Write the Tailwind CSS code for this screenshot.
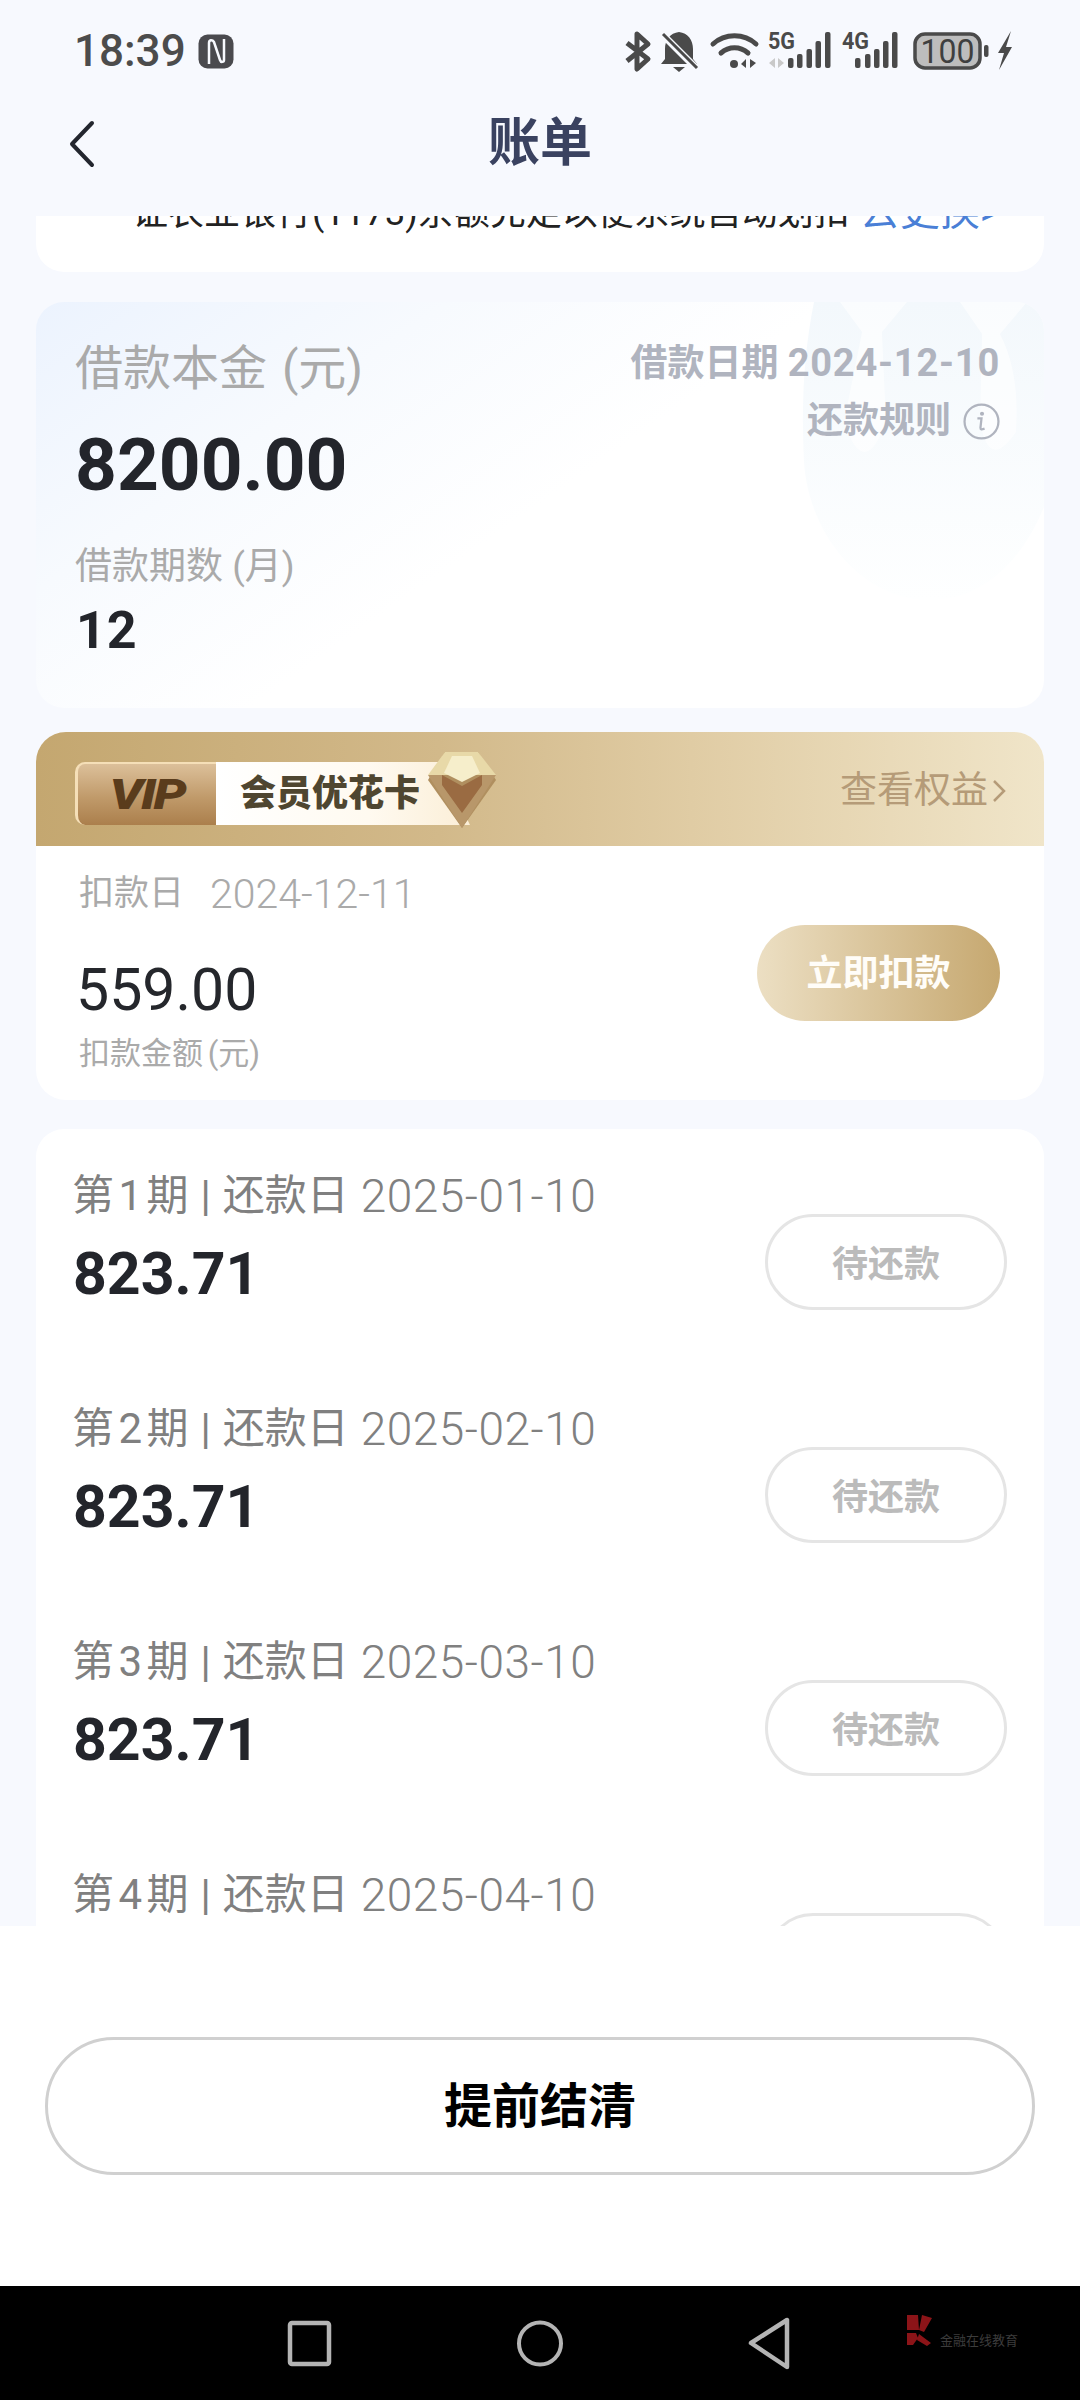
<!DOCTYPE html>
<html lang="zh">
<head>
<meta charset="utf-8">
<script src="https://cdn.jsdelivr.net/npm/@tailwindcss/browser@4"></script>
</head>
<body class="m-0">
<div class="w-[1080px] h-[2400px] flex flex-col overflow-hidden bg-[#f7f9fe] font-[Roboto,'Noto_Sans_CJK_SC',sans-serif]">

  <!-- status bar + nav header -->
  <header class="h-[216px] shrink-0 flex flex-col">
    <div class="h-[100px] shrink-0 relative flex items-start pl-[74px] pt-[26px]">
      <span class="text-[44px] leading-[50px] font-medium text-[#4c4c4c]">18:39</span>
      <svg class="ml-[12px] mt-[8px]" width="36" height="36" viewBox="0 0 36 36">
        <rect x="0.500" y="0.500" width="35" height="34" rx="9" fill="#4a4a4e"/>
        <path d="M11 30V9c0-3 3-4 5-1l6 18c1 3 4 2 4 0V5" fill="none" stroke="#f7f9fe" stroke-width="2.500"/>
        <path d="M6 8v19M31 8v19" stroke="#4a4a4e" stroke-width="2"/>
      </svg>
      <svg class="absolute left-[600px] top-[20px]" width="440" height="60" viewBox="0 0 440 60">
        <path d="M27 23 48 39 37 49V14l11 10-21 17" fill="none" stroke="#4a4a4a" stroke-width="5" stroke-linejoin="round"/>
        <path d="M79 12c-9 1-14 8-14 17v10l-4 5h36l-4-5V29c0-9-5-16-14-17z" fill="#4a4a4a"/>
        <path d="M73 47h12l-6 5z" fill="#4a4a4a"/>
        <path d="M60 12 96 48" stroke="#f7f9fe" stroke-width="7"/>
        <path d="M63 14 97 48" stroke="#4a4a4a" stroke-width="3"/>
        <path d="M113 24c12-11 31-11 43 0M121 33c8-7 19-7 27 0" fill="none" stroke="#4a4a4a" stroke-width="5" stroke-linecap="round"/>
        <circle cx="134" cy="44" r="4" fill="#4a4a4a"/>
        <path d="M146 39v9l-5-4zM150 39v9l6-5z" fill="#4a4a4a"/>
        <text x="168" y="29" font-size="23" font-weight="700" fill="#4a4a4a" font-family="Roboto" textLength="27" lengthAdjust="spacingAndGlyphs">5G</text>
        <path d="M175 38v10l-6-5zM178 38v10l6-5z" fill="#c9c9c9"/>
        <g fill="#4a4a4a">
          <rect x="188" y="38" width="5.500" height="10" rx="2"/>
          <rect x="197" y="34" width="5.500" height="14" rx="2"/>
          <rect x="206.500" y="29" width="5.500" height="19" rx="2"/>
          <rect x="215.500" y="21" width="5.500" height="27" rx="2"/>
          <rect x="225" y="12" width="5.500" height="36" rx="2"/>
          <rect x="255" y="38" width="5.500" height="10" rx="2"/>
          <rect x="265" y="34" width="5.500" height="14" rx="2"/>
          <rect x="274" y="29" width="5.500" height="19" rx="2"/>
          <rect x="283" y="21" width="5.500" height="27" rx="2"/>
          <rect x="292" y="12" width="5.500" height="36" rx="2"/>
        </g>
        <text x="242" y="29" font-size="23" font-weight="700" fill="#4a4a4a" font-family="Roboto" textLength="27" lengthAdjust="spacingAndGlyphs">4G</text>
        <rect x="315" y="14" width="65" height="34" rx="10" fill="#bdbdbd" stroke="#4a4a4a" stroke-width="3.500"/>
        <text x="347.500" y="43" text-anchor="middle" font-size="33" fill="#3f3f3f" font-family="Roboto" textLength="54" lengthAdjust="spacingAndGlyphs">100</text>
        <rect x="384" y="25" width="4.500" height="12" rx="2" fill="#4a4a4a"/>
        <path d="M411 11 398 33h6l-5 17 13-23h-6z" fill="#4a4a4a"/>
      </svg>
    </div>
    <div class="h-[88px] shrink-0 relative flex items-center justify-center">
      <svg class="absolute left-[68px] top-[20px]" width="28" height="48" viewBox="0 0 28 48">
        <path d="M24 3 4 24l20 21" fill="none" stroke="#23262e" stroke-width="4" stroke-linecap="round" stroke-linejoin="round"/>
      </svg>
      <span class="text-[52px] leading-[72px] font-bold text-[#3a4260]">账单</span>
    </div>
  </header>

  <!-- scroll area -->
  <main class="h-[1710px] shrink-0 overflow-hidden flex flex-col">
    <!-- scrolled, clipped first card -->
    <div class="mx-[36px] h-[56px] shrink-0 bg-white rounded-b-[28px] overflow-hidden">
      <div class="mt-[-26px] pl-[96px] h-[44px] whitespace-nowrap text-[36px] leading-[44px] text-[#222]">
        证农业银行(1173)余额充足以便系统自动划扣<span class="text-[40px] text-[#4a7fd6] ml-[10px]">去更换&gt;</span>
      </div>
    </div>

    <!-- loan card -->
    <section class="mt-[30px] mx-[36px] h-[406px] shrink-0 relative overflow-hidden rounded-[28px] bg-[linear-gradient(145deg,#ecf3fe_0%,#f7fafe_26%,#ffffff_50%,#ffffff_100%)]">
      <svg class="absolute right-0 top-0" width="260" height="300" viewBox="0 0 260 300">
        <defs>
          <linearGradient id="blob" x1="0" y1="0" x2="0" y2="1">
            <stop offset="0" stop-color="#f3f8fc"/>
            <stop offset="1" stop-color="#feffff"/>
          </linearGradient>
        </defs>
        <path d="M30 0H260V205C235 265 195 298 145 298 80 298 25 235 20 160 17 100 20 50 30 0z" fill="url(#blob)"/>
        <path d="M56 0H123L98 30 102 120Q80 180 60 120L78 30z" fill="#ffffff" opacity="0.6"/>
        <path d="M176 0H243L216 32Q236 70 232 130 205 170 196 120L198 32z" fill="#ffffff" opacity="0.6"/>
      </svg>
      <div class="relative flex justify-between pl-[39px] pr-[44px] pt-[39px]">
        <div class="flex flex-col">
          <div class="text-[48px] leading-[56px] text-[#aaaaaa] [word-spacing:3px]">借款本金 (元)</div>
          <div class="mt-[26px] text-[73px] leading-[84px] font-bold text-[#23252b]">8200.00</div>
          <div class="mt-[37px] text-[37px] leading-[46px] text-[#aaaaaa]">借款期数 (月)</div>
          <div class="mt-[11px] ml-[1px] text-[52px] leading-[60px] font-bold text-[#23252b] tracking-[1px]">12</div>
        </div>
        <div class="flex flex-col items-end">
          <div class="text-[37px] leading-[44px] font-semibold text-[#b0b4bf] whitespace-nowrap">借款日期 <span class="text-[38px] font-bold tracking-[0.8px]">2024-12-10</span></div>
          <div class="mt-[13px] flex items-center gap-[12px] text-[36px] leading-[44px] font-semibold text-[#b0b4bf]">
            还款规则
            <svg width="37" height="37" viewBox="0 0 36 36">
              <circle cx="18" cy="18" r="16.500" fill="none" stroke="#b0b4bf" stroke-width="2.200"/>
              <circle cx="18.500" cy="10.500" r="2" fill="#b0b4bf"/>
              <path d="M14 15h4l-1 9c0 2 1 2 4 1" fill="none" stroke="#b0b4bf" stroke-width="2.200"/>
            </svg>
          </div>
        </div>
      </div>
    </section>

    <!-- VIP card -->
    <section class="mt-[24px] mx-[36px] h-[368px] shrink-0 overflow-hidden rounded-[30px] bg-white">
      <div class="h-[114px] relative flex items-center justify-between pl-[39px] pr-[38px] bg-[linear-gradient(90deg,#c4a770_0%,#d2b98a_40%,#e0cca4_65%,#f0e5c9_100%)]">
        <div class="flex h-[63px] mt-[9px] items-stretch">
          <div class="w-[141px] rounded-l-[10px] border-l-[3px] border-t-[2px] border-[#f5dfb8] flex items-center justify-center bg-[linear-gradient(180deg,#dcc09a_0%,#c09a6a_55%,#ab7f4c_100%)]">
            <span class="inline-block scale-x-[1.25] text-[42px] leading-none font-black italic tracking-[-2px] text-[#5a3c1c]">VIP</span>
          </div>
          <div class="w-[254px] relative pl-[24px] flex items-center bg-[linear-gradient(90deg,#ffffff_0%,#fffaf0_60%,#fbeed7_100%)] [clip-path:polygon(0_0,100%_0,94%_50%,100%_100%,0_100%)]">
            <span class="text-[36px] leading-none font-black text-[#4f4630]">会员优花卡</span>
          </div>
          <svg class="ml-[-42px] mt-[-10px] relative" width="68" height="76" viewBox="0 0 68 76">
            <path d="M17 0h33l18 28-34 48L0 28z" fill="#b08f5f"/>
            <path d="M17 0h33l18 23H0z" fill="#e8d9a8"/>
            <path d="M24 4h20l8 17-18 9-18-9z" fill="#f6eecb"/>
            <path d="M0 23h14l20 30 20-30h14L34 76z" fill="#b8976a"/>
            <path d="M14 23 34 34l20-11 0 10-20 28-20-28z" fill="#9a6b42"/>
          </svg>
        </div>
        <div class="mt-[3px] flex items-center gap-[4px] text-[37px] leading-[44px] text-[#b59b78]">
          查看权益
          <svg width="14" height="24" viewBox="0 0 14 24"><path d="M2 2l10 10L2 22" fill="none" stroke="#b59b78" stroke-width="2.500"/></svg>
        </div>
      </div>
      <div class="flex justify-between items-start pl-[43px] pr-[44px]">
        <div class="flex flex-col pt-[26px]">
          <div class="flex items-center text-[35px] leading-[44px] text-[#aaaaaa]"><span>扣款日</span><span class="ml-[26px] text-[41px] font-light">2024-12-11</span></div>
          <div class="mt-[39px] ml-[-3px] text-[59px] leading-[70px] text-[#25272c]">559.00</div>
          <div class="mt-[9px] text-[31px] leading-[40px] text-[#aaaaaa] [word-spacing:-3px]">扣款金额 (元)</div>
        </div>
        <div class="mt-[79px] pt-[2px] w-[243px] h-[96px] rounded-full flex items-center justify-center text-[36px] font-bold text-[#fffdf8] bg-[linear-gradient(90deg,#ecdfc3_0%,#c6a870_100%)]">立即扣款</div>
      </div>
    </section>

    <!-- installments -->
    <section class="mt-[29px] mx-[36px] flex-1 flex flex-col bg-white rounded-t-[28px] pl-[36px] pr-[37px] pt-[43px]">
      <div class="h-[233px] shrink-0 flex justify-between items-start">
        <div class="flex flex-col">
          <div class="flex items-center text-[42px] leading-[48px] text-[#808080] whitespace-nowrap [word-spacing:-6px]"><span>第 1 期</span><span class="mx-[12px]">|</span><span>还款日</span><span class="ml-[12px] text-[46px] font-light tracking-[0.5px]">2025-01-10</span></div>
          <div class="mt-[20px] ml-[1px] text-[59px] leading-[68px] font-bold text-[#23252b]">823.71</div>
        </div>
        <div class="mt-[42px] pt-[5px] w-[242px] h-[96px] rounded-full border-[3px] border-[#e5e5e5] flex items-center justify-center text-[36px] font-semibold text-[#bbbbbb]">待还款</div>
      </div>
      <div class="h-[233px] shrink-0 flex justify-between items-start">
        <div class="flex flex-col">
          <div class="flex items-center text-[42px] leading-[48px] text-[#808080] whitespace-nowrap [word-spacing:-6px]"><span>第 2 期</span><span class="mx-[12px]">|</span><span>还款日</span><span class="ml-[12px] text-[46px] font-light tracking-[0.5px]">2025-02-10</span></div>
          <div class="mt-[20px] ml-[1px] text-[59px] leading-[68px] font-bold text-[#23252b]">823.71</div>
        </div>
        <div class="mt-[42px] pt-[5px] w-[242px] h-[96px] rounded-full border-[3px] border-[#e5e5e5] flex items-center justify-center text-[36px] font-semibold text-[#bbbbbb]">待还款</div>
      </div>
      <div class="h-[233px] shrink-0 flex justify-between items-start">
        <div class="flex flex-col">
          <div class="flex items-center text-[42px] leading-[48px] text-[#808080] whitespace-nowrap [word-spacing:-6px]"><span>第 3 期</span><span class="mx-[12px]">|</span><span>还款日</span><span class="ml-[12px] text-[46px] font-light tracking-[0.5px]">2025-03-10</span></div>
          <div class="mt-[20px] ml-[1px] text-[59px] leading-[68px] font-bold text-[#23252b]">823.71</div>
        </div>
        <div class="mt-[42px] pt-[5px] w-[242px] h-[96px] rounded-full border-[3px] border-[#e5e5e5] flex items-center justify-center text-[36px] font-semibold text-[#bbbbbb]">待还款</div>
      </div>
      <div class="h-[233px] shrink-0 flex justify-between items-start">
        <div class="flex flex-col">
          <div class="flex items-center text-[42px] leading-[48px] text-[#808080] whitespace-nowrap [word-spacing:-6px]"><span>第 4 期</span><span class="mx-[12px]">|</span><span>还款日</span><span class="ml-[12px] text-[46px] font-light tracking-[0.5px]">2025-04-10</span></div>
        </div>
        <div class="mt-[42px] w-[242px] h-[96px] rounded-full border-[3px] border-[#e5e5e5]"></div>
      </div>
    </section>
  </main>

  <!-- footer -->
  <footer class="h-[360px] shrink-0 bg-white flex items-start justify-center pt-[111px]">
    <div class="w-[990px] h-[138px] pt-[2px] rounded-full border-[3px] border-[#d0d0d0] flex items-center justify-center text-[48px] font-bold text-black">提前结清</div>
  </footer>

  <!-- system nav -->
  <nav class="h-[114px] shrink-0 bg-black relative">
    <svg class="absolute left-[280px] top-[28px]" width="520" height="60" viewBox="0 0 520 60">
      <rect x="10" y="9" width="39" height="41" rx="2" fill="none" stroke="#b4b4b4" stroke-width="4.500"/>
      <circle cx="260" cy="29.500" r="21" fill="none" stroke="#b4b4b4" stroke-width="4"/>
      <path d="M507 6v47L471 29z" fill="none" stroke="#b4b4b4" stroke-width="4.500" stroke-linejoin="round"/>
    </svg>
    <svg class="absolute left-[900px] top-[29px]" width="36" height="32" viewBox="0 0 36 32">
      <path d="M7 0h11l1 15H7zM22 0l10 3-8 14-5-2zM7 18h9l2 5-5 7H7zM19 19l12 9-4 3-10-6z" fill="#8c1418"/>
    </svg>
    <span class="absolute left-[940px] top-[47px] text-[13px] leading-[16px] text-[#3c3c3c] whitespace-nowrap">金融在线教育</span>
  </nav>
</div>
</body>
</html>
